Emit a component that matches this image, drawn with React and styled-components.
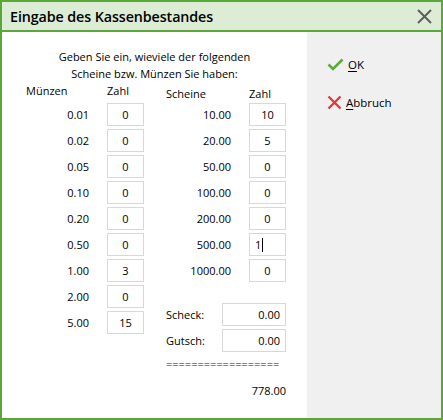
import styled, { createGlobalStyle } from "styled-components";

const GlobalStyle = createGlobalStyle`
  html, body {
    margin: 0;
    padding: 0;
    background: #ffffff;
  }
  body {
    font-family: "Open Sans", "DejaVu Sans", sans-serif;
    font-size: 11px;
    color: #000;
  }
`;

const Window = styled.div`
  width: 443px;
  height: 420px;
  box-sizing: border-box;
  border: 2px solid #5ba83a;
  display: flex;
  flex-direction: column;
`;

const TitleBar = styled.div`
  height: 28px;
  border-bottom: 2px solid #5ba83a;
  background: #dcecd5;
  display: flex;
  align-items: center;
  justify-content: space-between;
  padding: 0 9px 0 8px;
`;

const Title = styled.div`
  font-size: 14.3px;
  font-weight: 600;
  letter-spacing: -0.1px;
`;

const Body = styled.div`
  flex: 1;
  display: flex;
`;

const FormPanel = styled.div`
  width: 305px;
  background: #fff;
  padding-top: 16px;
`;

const Intro = styled.div`
  text-align: center;
  line-height: 17px;
`;

const Columns = styled.div`
  display: flex;
`;

const Block = styled.div`
  display: grid;
  grid-template-columns: 105px 37px;
  row-gap: 3px;
  align-items: center;
  align-content: start;
`;

const Head = styled.div`
  box-sizing: border-box;
  line-height: 17px;
  height: 18px;
  padding-left: ${({ $indent }) => $indent || 0}px;
  padding-top: ${({ $shift }) => $shift || 0}px;
  align-self: start;
  white-space: nowrap;
`;

const Label = styled.div`
  text-align: right;
  padding-right: 18px;
`;

const Box = styled.div`
  box-sizing: border-box;
  height: 23px;
  width: ${({ $w }) => $w || 37}px;
  border: 1px solid #d8d8d8;
  background: #fff;
  display: flex;
  align-items: center;
  justify-content: ${({ $align }) => $align || "center"};
  padding: 0 5px;
`;

const Caret = styled.span`
  display: inline-block;
  width: 1px;
  height: 14px;
  background: #000;
  margin-left: 1px;
`;

const ExtraRow = styled.div`
  grid-column: 1 / span 2;
  display: flex;
  align-items: center;
  justify-content: space-between;
  padding-left: 22px;
  margin-top: ${({ $gap }) => $gap || 0}px;
`;

const Rule = styled.div`
  grid-column: 1 / span 2;
  padding-left: 22px;
  line-height: 17px;
  color: #222;
`;

const Total = styled.div`
  grid-column: 1 / span 2;
  text-align: right;
  line-height: 17px;
  margin-top: 7px;
`;

const ButtonPanel = styled.div`
  flex: 1;
  background: #f0f0f0;
  padding: 24px 0 0 20px;
  display: flex;
  flex-direction: column;
  gap: 21px;
`;

const Action = styled.div`
  display: flex;
  align-items: center;
  gap: 4px;
  height: 17px;
  font-size: 11.5px;
  u {
    text-decoration-thickness: 1px;
    text-underline-offset: 2px;
  }
`;

const coins = [
  ["0.01", "0"],
  ["0.02", "0"],
  ["0.05", "0"],
  ["0.10", "0"],
  ["0.20", "0"],
  ["0.50", "0"],
  ["1.00", "3"],
  ["2.00", "0"],
  ["5.00", "15"],
];

const notes = [
  ["10.00", "10"],
  ["20.00", "5"],
  ["50.00", "0"],
  ["100.00", "0"],
  ["200.00", "0"],
  ["500.00", "1", true],
  ["1000.00", "0"],
];

const CloseIcon = () => (
  <svg width="15" height="15" viewBox="0 0 15 15">
    <path d="M1 1 L14 14 M14 1 L1 14" stroke="#5e5e5e" strokeWidth="2" />
  </svg>
);

const CheckIcon = () => (
  <svg width="17" height="13" viewBox="0 0 17 13">
    <path d="M1.5 6.5 L6 11 L15.5 1.5" stroke="#5aab3b" strokeWidth="2.6" fill="none" />
  </svg>
);

const CrossIcon = () => (
  <svg width="15" height="15" viewBox="0 0 15 15">
    <path d="M1.5 1.5 L13.5 13.5 M13.5 1.5 L1.5 13.5" stroke="#e2393e" strokeWidth="2.4" />
  </svg>
);

const App = () => {
  return (
    <>
      <GlobalStyle />
      <Window>
        <TitleBar>
          <Title>Eingabe des Kassenbestandes</Title>
          <CloseIcon />
        </TitleBar>
        <Body>
          <FormPanel>
            <Intro>
              Geben Sie ein, wieviele der folgenden
              <br />
              Scheine bzw. Münzen Sie haben:
            </Intro>
            <Columns>
              <Block>
                <Head $indent={24}>Münzen</Head>
                <Head>Zahl</Head>
                {coins.map(([value, count]) => (
                  <>
                    <Label key={value + "l"}>{value}</Label>
                    <Box key={value + "b"}>{count}</Box>
                  </>
                ))}
              </Block>
              <Block>
                <Head $indent={22} $shift={3}>Scheine</Head>
                <Head $shift={3}>Zahl</Head>
                {notes.map(([value, count, editing]) => (
                  <>
                    <Label key={value + "l"}>{value}</Label>
                    {editing ? (
                      <Box key={value + "b"} $align="flex-start">
                        {count}
                        <Caret />
                      </Box>
                    ) : (
                      <Box key={value + "b"}>{count}</Box>
                    )}
                  </>
                ))}
                <ExtraRow $gap={18}>
                  <span>Scheck:</span>
                  <Box $w={64} $align="flex-end">0.00</Box>
                </ExtraRow>
                <ExtraRow>
                  <span>Gutsch:</span>
                  <Box $w={64} $align="flex-end">0.00</Box>
                </ExtraRow>
                <Rule>==================</Rule>
                <Total>778.00</Total>
              </Block>
            </Columns>
          </FormPanel>
          <ButtonPanel>
            <Action>
              <CheckIcon />
              <span>
                <u>O</u>K
              </span>
            </Action>
            <Action>
              <CrossIcon />
              <span>
                <u>A</u>bbruch
              </span>
            </Action>
          </ButtonPanel>
        </Body>
      </Window>
    </>
  );
};

export default App;
